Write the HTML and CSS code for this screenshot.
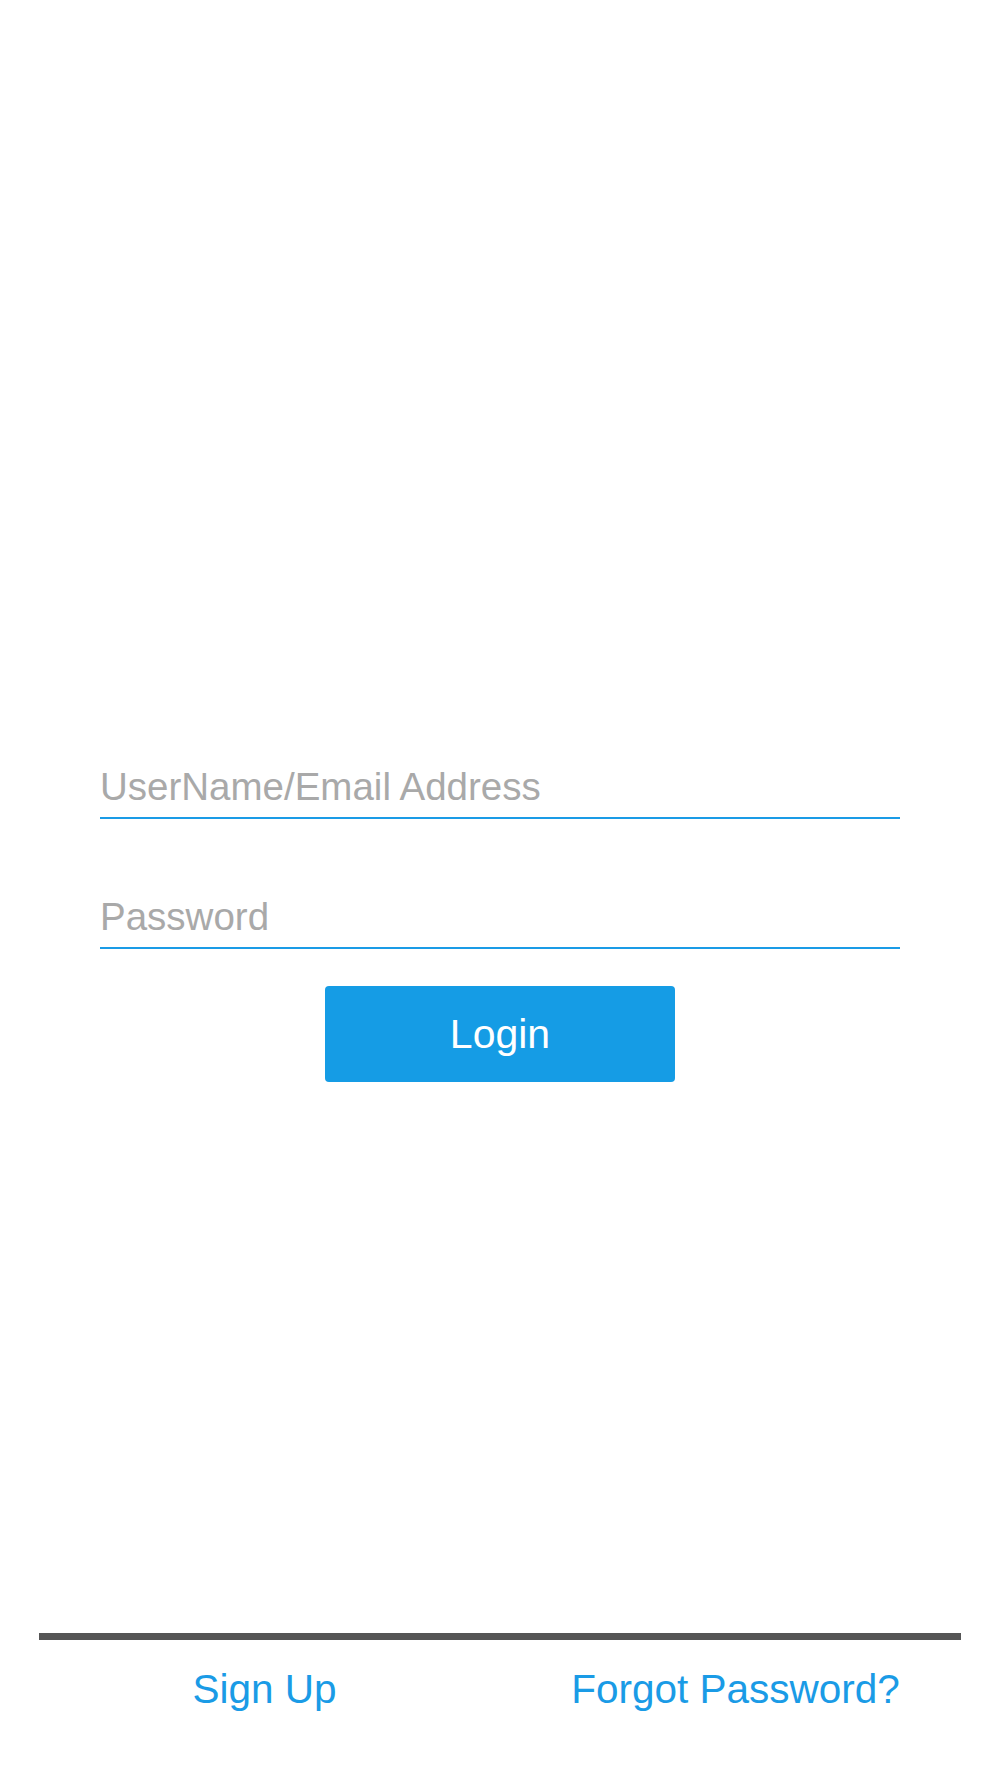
FILE: index.html
```
<!DOCTYPE html>
<html lang="en">
<head>
<meta charset="utf-8">
<title>Login</title>
<link rel="stylesheet" href="styles.css">
</head>
<body>
<div class="screen">
  <main class="form">
    <div class="field"><span class="placeholder">UserName/Email Address</span></div>
    <div class="field field-password"><span class="placeholder">Password</span></div>
    <div class="actions">
      <button class="login-btn" type="button">Login</button>
    </div>
  </main>
  <footer class="footer">
    <div class="footer-bar"></div>
    <nav class="footer-links">
      <a class="footer-link" href="#">Sign Up</a>
      <a class="footer-link" href="#">Forgot Password?</a>
    </nav>
  </footer>
</div>
</body>
</html>
```
FILE: styles.css
```
html, body {
  margin: 0;
  padding: 0;
  background: #ffffff;
}

body {
  font-family: "Liberation Sans", Arial, sans-serif;
}

.screen {
  height: 1778px;
  display: flex;
  flex-direction: column;
}

.form {
  padding: 765px 100px 0;
}

.field {
  height: 44px;
  line-height: 44px;
  padding-bottom: 8px;
  border-bottom: 2px solid #1a9be6;
}

.field-password {
  margin-top: 76px;
}

.placeholder {
  font-size: 38.5px;
  color: #a9a9a9;
}

.actions {
  display: flex;
  justify-content: center;
  margin-top: 37px;
}

.login-btn {
  width: 350px;
  height: 96px;
  border: none;
  border-radius: 4px;
  background: #159ce5;
  color: #ffffff;
  font-family: "Liberation Sans", Arial, sans-serif;
  font-size: 41px;
  padding: 0;
  cursor: pointer;
}

.footer {
  margin-top: auto;
}

.footer-bar {
  height: 7px;
  margin: 0 39px;
  background: #555555;
}

.footer-links {
  display: grid;
  grid-template-columns: 1fr 1fr;
  padding: 25px 29px 65px;
}

.footer-link {
  text-align: center;
  font-size: 40.5px;
  line-height: 48px;
  color: #1a9be6;
  text-decoration: none;
}
```
